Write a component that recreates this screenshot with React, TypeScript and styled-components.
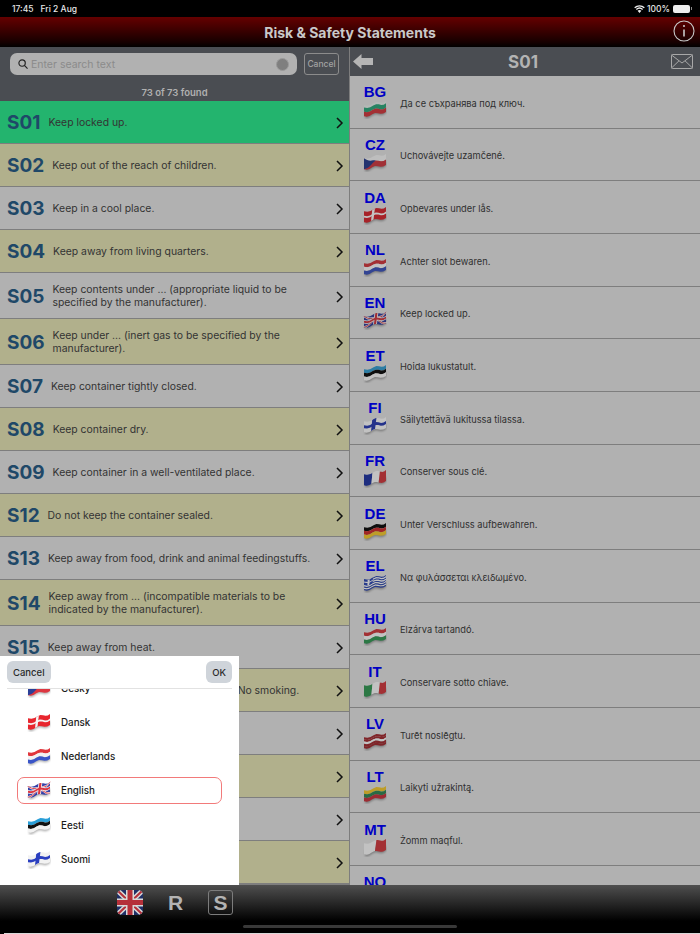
import React from "react";
import styled, { createGlobalStyle } from "styled-components";

const Global = createGlobalStyle`
  html, body { margin: 0; padding: 0; background: #000; }
  * { box-sizing: border-box; }
`;

const Page = styled.div`
  position: relative;
  width: 700px;
  height: 934px;
  overflow: hidden;
  display: flex;
  flex-direction: column;
  background: #000;
  font-family: Inter, "Liberation Sans", sans-serif;
`;
const StatusBar = styled.div`
  height: 17px;
  flex: none;
  padding: 0 8px 0 12px;
  display: flex;
  align-items: center;
  color: #e8e8e8;
  font-size: 8.5px;
  font-weight: 500;
`;
const StatusDate = styled.span`
  margin-left: 7px;
  flex: 1;
`;
const StatusPct = styled.span`
  margin: 0 3px 0 2px;
`;
const Battery = styled.span`
  width: 17px;
  height: 8px;
  border-radius: 2px;
  background: #eee;
  margin-right: 1px;
`;
const BatteryTip = styled.span`
  width: 1px;
  height: 3px;
  background: #888;
`;
const Header = styled.header`
  height: 30px;
  flex: none;
  display: flex;
  align-items: center;
  justify-content: center;
  position: relative;
  background: linear-gradient(#650000, #150000 85%, #000);
  color: #c9c9c9;
  font-size: 14px;
  font-weight: 700;
  font-family: Inter, sans-serif;
`;
const InfoButton = styled.svg`
  position: absolute;
  right: 5px;
  top: 3px;
`;
const Main = styled.main`
  height: 838px;
  flex: none;
  display: flex;
  overflow: hidden;
`;
const LeftPane = styled.section`
  width: 350px;
  flex: none;
  display: flex;
  flex-direction: column;
  border-right: 1px solid #7d7d7d;
  background: #7e7e7e;
`;
const SearchArea = styled.div`
  height: 54px;
  flex: none;
  background: #4a4d52;
  padding: 6px 10px 0;
  display: flex;
  flex-direction: column;
  align-items: stretch;
`;
const SearchRow = styled.div`
  display: flex;
  gap: 7px;
  height: 22px;
`;
const SearchField = styled.div`
  flex: 1;
  background: #b1b1b1;
  border-radius: 7px;
  display: flex;
  align-items: center;
  padding: 0 8px;
  gap: 3px;
  color: #8b8b8b;
  font-size: 10.5px;
`;
const Placeholder = styled.span`
  flex: 1;
`;
const ClearDot = styled.span`
  width: 13px;
  height: 13px;
  border-radius: 50%;
  background: #7f7f7f;
  border: 1px solid #9a9a9a;
`;
const CancelSearch = styled.button`
  width: 35px;
  padding: 0;
  background: transparent;
  border: 1px solid #8c8c8c;
  border-radius: 3px;
  color: #a3a3a3;
  font: 500 8.5px Inter, sans-serif;
`;
const Found = styled.div`
  margin-top: 12px;
  text-align: center;
  color: #b0b0b0;
  font-size: 9.5px;
  font-weight: 600;
`;
const Statements = styled.div`
  flex: 1;
`;
const Row = styled.div<{ $tone: string }>`
  min-height: 43px;
  padding: 11px 5px 9px 7px;
  display: flex;
  align-items: center;
  gap: 8px;
  border-bottom: 1px solid #7e7e7e;
  background: ${(p) => p.$tone};
`;
const Code = styled.span`
  color: #1f4868;
  font: 700 19px/20px Inter, "Liberation Sans", sans-serif;
  flex: none;
`;
const Sentence = styled.span`
  flex: 1;
  color: #333;
  font-size: 10.4px;
  line-height: 12.5px;
  padding-right: 12px;
`;
const RightPane = styled.section`
  flex: 1;
  display: flex;
  flex-direction: column;
  overflow: hidden;
  background: #b1b1b1;
`;
const DetailBar = styled.div`
  height: 29px;
  flex: none;
  background: #4a4d52;
  display: grid;
  grid-template-columns: 1fr auto 1fr;
  align-items: center;
  padding: 0 7px 0 3px;
  color: #b3b3b3;
  font: 700 17px Inter, "Liberation Sans", sans-serif;
`;
const MailIcon = styled.svg`
  justify-self: end;
`;
const TranslationRow = styled.div`
  height: 52.67px;
  flex: none;
  display: flex;
  align-items: center;
  border-bottom: 1px solid #7e7e7e;
`;
const LangCell = styled.div`
  width: 50px;
  flex: none;
  display: flex;
  flex-direction: column;
  align-items: center;
  color: #0000c4;
  font: 700 15px/16px "Liberation Sans", sans-serif;
`;
const Translation = styled.span`
  color: #2f2f2f;
  font-size: 9.25px;
  margin-top: 3px;
`;
const Toolbar = styled.footer`
  flex: 1;
  position: relative;
  background: linear-gradient(#4f4f4f, #000 75%);
  display: flex;
  align-items: flex-start;
  padding: 5px 0 0 117px;
  gap: 20px;
`;
const BottomEdge = styled.div`
  height: 1px;
  flex: none;
  margin-left: 4px;
  background: #d9d9d9;
`;
const ToolLetter = styled.span<{ $boxed?: boolean }>`
  width: 25px;
  height: 25px;
  display: flex;
  align-items: center;
  justify-content: center;
  color: #b3b3b3;
  font: 700 21px "Liberation Sans", sans-serif;
  border: ${(p) => (p.$boxed ? "1px solid #7c7c7c" : "none")};
  border-radius: 3px;
`;
const HomeBar = styled.span`
  position: absolute;
  left: 243px;
  width: 214px;
  top: 40px;
  height: 3px;
  border-radius: 2px;
  background: #383838;
`;
const Picker = styled.div`
  position: absolute;
  left: 0;
  top: 656px;
  width: 239px;
  height: 229px;
  background: #fff;
  display: flex;
  flex-direction: column;
`;
const PickerBar = styled.div`
  height: 33px;
  margin: 0 7px;
  flex: none;
  display: flex;
  justify-content: space-between;
  align-items: flex-end;
  padding-bottom: 5px;
  border-bottom: 1px solid #e2e2e2;
`;
const PickerButton = styled.button`
  height: 22px;
  padding: 0 6px;
  border: none;
  border-radius: 6px;
  background: #cfd4da;
  color: #2a2a2a;
  font: 500 9.5px Inter, sans-serif;
`;
const PickerList = styled.div`
  flex: 1;
  overflow: hidden;
`;
const PickerItems = styled.div`
  margin-top: -14.5px;
  padding: 0 17px;
`;
const PickerItem = styled.div<{ $selected?: boolean }>`
  height: 27px;
  margin-bottom: 7.25px;
  display: flex;
  align-items: center;
  gap: 10px;
  padding-left: 9px;
  border-radius: 7px;
  border: 1px solid ${(p) => (p.$selected ? "#f27a7a" : "transparent")};
  color: #1c1c1c;
  font-size: 9.8px;
  font-weight: 500;
`;

type Poly = { pts: [number, number][]; c: string };
const rect = (a: number, b: number, c: number, d: number, col: string): Poly => ({
  pts: [[a, b], [c, b], [c, d], [a, d]],
  c: col,
});
const hs = (...cols: string[]) => cols.map((c, i) => rect(0, i / cols.length, 1, (i + 1) / cols.length, c));
const vs = (...cols: string[]) => cols.map((c, i) => rect(i / cols.length, 0, (i + 1) / cols.length, 1, c));
const cross = (bg: string, fg: string, w = 0.2): Poly[] => [
  rect(0, 0, 1, 1, bg),
  rect(0, 0.5 - w / 2, 1, 0.5 + w / 2, fg),
  rect(0.32, 0, 0.32 + w * 0.7, 1, fg),
];
const diag = (x0: number, y0: number, x1: number, y1: number, t: number, c: string): Poly => ({
  pts: [[x0 - t, y0], [x0 + t, y0], [x1 + t, y1], [x1 - t, y1]],
  c,
});
const uk: Poly[] = [
  rect(0, 0, 1, 1, "#3540a8"),
  diag(0, 0, 1, 1, 0.1, "#f2f2f2"),
  diag(1, 0, 0, 1, 0.1, "#f2f2f2"),
  diag(0, 0, 1, 1, 0.04, "#dd3640"),
  diag(1, 0, 0, 1, 0.04, "#dd3640"),
  rect(0, 0.34, 1, 0.66, "#f2f2f2"),
  rect(0.41, 0, 0.59, 1, "#f2f2f2"),
  rect(0, 0.41, 1, 0.59, "#dd3640"),
  rect(0.45, 0, 0.55, 1, "#dd3640"),
];
const FLAGS: Record<string, Poly[]> = {
  BG: [rect(0, 0, 1, 0.2, "#dfe8e4"), rect(0, 0.2, 1, 0.6, "#22a878"), rect(0, 0.6, 1, 1, "#e0363c")],
  CZ: [...hs("#eeeeee", "#dd3640"), { pts: [[0, 0], [0.5, 0.5], [0, 1]], c: "#2a3f98" }],
  DA: cross("#e8262e", "#f5f5f5", 0.16),
  NL: hs("#e0363c", "#f2f2f2", "#3a55c8"),
  EN: uk,
  ET: hs("#2a9fd8", "#111111", "#f2f2f2"),
  FI: cross("#f2f2f2", "#2a3fc0", 0.26),
  FR: vs("#2038b0", "#f2f2f2", "#e0363c"),
  DE: hs("#111111", "#dd2a2a", "#f5c518"),
  EL: [
    ...Array.from({ length: 9 }, (_, i) => rect(0, i / 9, 1, (i + 1) / 9, i % 2 ? "#f2f2f2" : "#2e4bc0")),
    rect(0, 0, 0.36, 0.5, "#2e4bc0"),
    rect(0.14, 0, 0.22, 0.5, "#f2f2f2"),
    rect(0, 0.2, 0.36, 0.3, "#f2f2f2"),
  ],
  HU: hs("#e0363c", "#f2f2f2", "#2a9a50"),
  IT: vs("#2a9a50", "#f2f2f2", "#e0363c"),
  LV: hs("#b02a30", "#b02a30", "#f2f2f2", "#b02a30", "#b02a30"),
  LT: hs("#f5c518", "#2a8a50", "#d8303a"),
  MT: vs("#f2f2f2", "#e0363c"),
  NO: cross("#e0363c", "#f2f2f2", 0.2),
};

const warp = (u: number, v: number): [number, number] => {
  const top = 5.2 - 4.2 * u + 1.1 * Math.sin(u * Math.PI * 3);
  const x = 1 + 22 * u + 1.4 * (1 - v) * Math.sin(u * Math.PI);
  return [x, top + v * 11];
};
const warpPoints = (pts: [number, number][]) => {
  const out: string[] = [];
  pts.forEach((a, i) => {
    const b = pts[(i + 1) % pts.length];
    for (let s = 0; s < 8; s++) {
      const t = s / 8;
      const [x, y] = warp(a[0] + (b[0] - a[0]) * t, a[1] + (b[1] - a[1]) * t);
      out.push(`${x.toFixed(2)},${y.toFixed(2)}`);
    }
  });
  return out.join(" ");
};

const FlagSvg = styled.svg<{ $dim?: boolean }>`
  display: block;
  flex: none;
  ${(p) => (p.$dim ? "filter: brightness(0.8) saturate(0.85);" : "")}
`;
const FlagShadow = styled.polygon`
  fill: rgba(0, 0, 0, 0.32);
  filter: blur(1px);
`;
const Flag = ({ code, dim }: { code: string; dim?: boolean }) => (
  <FlagSvg $dim={dim} width={24} height={19} viewBox="0 0 24 19">
    <FlagShadow points={warpPoints([[0.05, 0.6], [1, 0.6], [1, 1.1], [0.05, 1.16]])} />
    {FLAGS[code].map((p, i) => (
      <polygon key={i} points={warpPoints(p.pts)} fill={p.c} />
    ))}
  </FlagSvg>
);

const STATEMENTS: [string, string][] = [
  ["S01", "Keep locked up."],
  ["S02", "Keep out of the reach of children."],
  ["S03", "Keep in a cool place."],
  ["S04", "Keep away from living quarters."],
  ["S05", "Keep contents under ... (appropriate liquid to be specified by the manufacturer)."],
  ["S06", "Keep under ... (inert gas to be specified by the manufacturer)."],
  ["S07", "Keep container tightly closed."],
  ["S08", "Keep container dry."],
  ["S09", "Keep container in a well-ventilated place."],
  ["S12", "Do not keep the container sealed."],
  ["S13", "Keep away from food, drink and animal feedingstuffs."],
  ["S14", "Keep away from ... (incompatible materials to be indicated by the manufacturer)."],
  ["S15", "Keep away from heat."],
  ["S16", "Keep away from sources of ignition — No smoking."],
  ["S17", "Keep away from combustible material."],
  ["S18", "Handle and open container with care."],
  ["S20", "When using do not eat or drink."],
  ["S21", "When using do not smoke."],
];
const TRANSLATIONS: [string, string][] = [
  ["BG", "Да се съхранява под ключ."],
  ["CZ", "Uchovávejte uzamčené."],
  ["DA", "Opbevares under lås."],
  ["NL", "Achter slot bewaren."],
  ["EN", "Keep locked up."],
  ["ET", "Hoida lukustatult."],
  ["FI", "Säilytettävä lukitussa tilassa."],
  ["FR", "Conserver sous clé."],
  ["DE", "Unter Verschluss aufbewahren."],
  ["EL", "Να φυλάσσεται κλειδωμένο."],
  ["HU", "Elzárva tartandó."],
  ["IT", "Conservare sotto chiave."],
  ["LV", "Turēt noslēgtu."],
  ["LT", "Laikyti užrakintą."],
  ["MT", "Żomm maqful."],
  ["NO", ""],
];
const LANGS: [string, string][] = [
  ["CZ", "Česky"],
  ["DA", "Dansk"],
  ["NL", "Nederlands"],
  ["EN", "English"],
  ["ET", "Eesti"],
  ["FI", "Suomi"],
];

const Chevron = () => (
  <svg width="8" height="12" viewBox="0 0 8 12" fill="none" stroke="#111" strokeWidth="1.5">
    <path d="M1 1 L6 6 L1 11" />
  </svg>
);

export default function App() {
  return (
    <Page>
      <Global />
      <StatusBar>
        <span>17:45</span>
        <StatusDate>Fri 2 Aug</StatusDate>
        <svg width="11" height="8" viewBox="0 0 11 8" fill="#eee">
          <path d="M5.5 8 L3.6 5.8 A3 3 0 0 1 7.4 5.8 Z M2.8 4.9 L1.9 3.9 A5.5 5.5 0 0 1 9.1 3.9 L8.2 4.9 A4.2 4.2 0 0 0 2.8 4.9 Z M1.2 3.2 L0.2 2.2 A8 8 0 0 1 10.8 2.2 L9.8 3.2 A6.6 6.6 0 0 0 1.2 3.2 Z" />
        </svg>
        <StatusPct>100%</StatusPct>
        <Battery />
        <BatteryTip />
      </StatusBar>
      <Header>
        Risk &amp; Safety Statements
        <InfoButton width="22" height="22" viewBox="0 0 22 22" fill="none" stroke="#c8c8c8">
          <circle cx="11" cy="11" r="10" strokeWidth="1.1" />
          <path d="M11 9.5 V16.5" strokeWidth="1.6" />
          <circle cx="11" cy="6" r="0.5" strokeWidth="1.1" />
        </InfoButton>
      </Header>
      <Main>
        <LeftPane>
          <SearchArea>
            <SearchRow>
              <SearchField>
                <svg width="10" height="10" viewBox="0 0 11 11" fill="none" stroke="#222" strokeWidth="1.3">
                  <circle cx="4.5" cy="4.5" r="3.5" />
                  <path d="M7 7 L10.5 10.5" />
                </svg>
                <Placeholder>Enter search text</Placeholder>
                <ClearDot />
              </SearchField>
              <CancelSearch>Cancel</CancelSearch>
            </SearchRow>
            <Found>73 of 73 found</Found>
          </SearchArea>
          <Statements>
            {STATEMENTS.map(([code, text], i) => (
              <Row key={code} $tone={i === 0 ? "#23b46e" : i % 2 ? "#b1b08c" : "#b1b1b1"}>
                <Code>{code}</Code>
                <Sentence>{text}</Sentence>
                <Chevron />
              </Row>
            ))}
          </Statements>
        </LeftPane>
        <RightPane>
          <DetailBar>
            <svg width="20" height="15" viewBox="0 0 20 15" fill="#b5b5b5">
              <path d="M0 7.5 L8.5 0 V4 H20 V11 H8.5 V15 Z" />
            </svg>
            <span>S01</span>
            <MailIcon width="22" height="15" viewBox="0 0 22 15" fill="none" stroke="#a8a8a8">
              <rect x="0.5" y="0.5" width="21" height="14" rx="1" />
              <path d="M0.5 1 L11 9 L21.5 1 M0.5 14 L8 6.8 M21.5 14 L14 6.8" />
            </MailIcon>
          </DetailBar>
          {TRANSLATIONS.map(([code, text]) => (
            <TranslationRow key={code}>
              <LangCell>
                {code}
                <Flag code={code} dim />
              </LangCell>
              <Translation>{text}</Translation>
            </TranslationRow>
          ))}
        </RightPane>
      </Main>
      <Toolbar>
        <svg width="26" height="25" viewBox="0 0 26 25">
          <defs>
            <clipPath id="ukClip">
              <rect width="26" height="25" rx="5" />
            </clipPath>
          </defs>
          <g clipPath="url(#ukClip)">
            <rect width="26" height="25" fill="#1f2f66" />
            <path d="M0 0 L26 25 M26 0 L0 25" stroke="#d8d8d8" strokeWidth="5" />
            <path d="M0 0 L26 25 M26 0 L0 25" stroke="#b5303a" strokeWidth="2" />
            <path d="M13 0 V25 M0 12.5 H26" stroke="#d8d8d8" strokeWidth="8" />
            <path d="M13 0 V25 M0 12.5 H26" stroke="#b5303a" strokeWidth="5" />
          </g>
        </svg>
        <ToolLetter>R</ToolLetter>
        <ToolLetter $boxed>S</ToolLetter>
        <HomeBar />
      </Toolbar>
      <BottomEdge />
      <Picker>
        <PickerBar>
          <PickerButton>Cancel</PickerButton>
          <PickerButton>OK</PickerButton>
        </PickerBar>
        <PickerList>
          <PickerItems>
            {LANGS.map(([code, name]) => (
              <PickerItem key={code} $selected={code === "EN"}>
                <Flag code={code} />
                <span>{name}</span>
              </PickerItem>
            ))}
          </PickerItems>
        </PickerList>
      </Picker>
    </Page>
  );
}
